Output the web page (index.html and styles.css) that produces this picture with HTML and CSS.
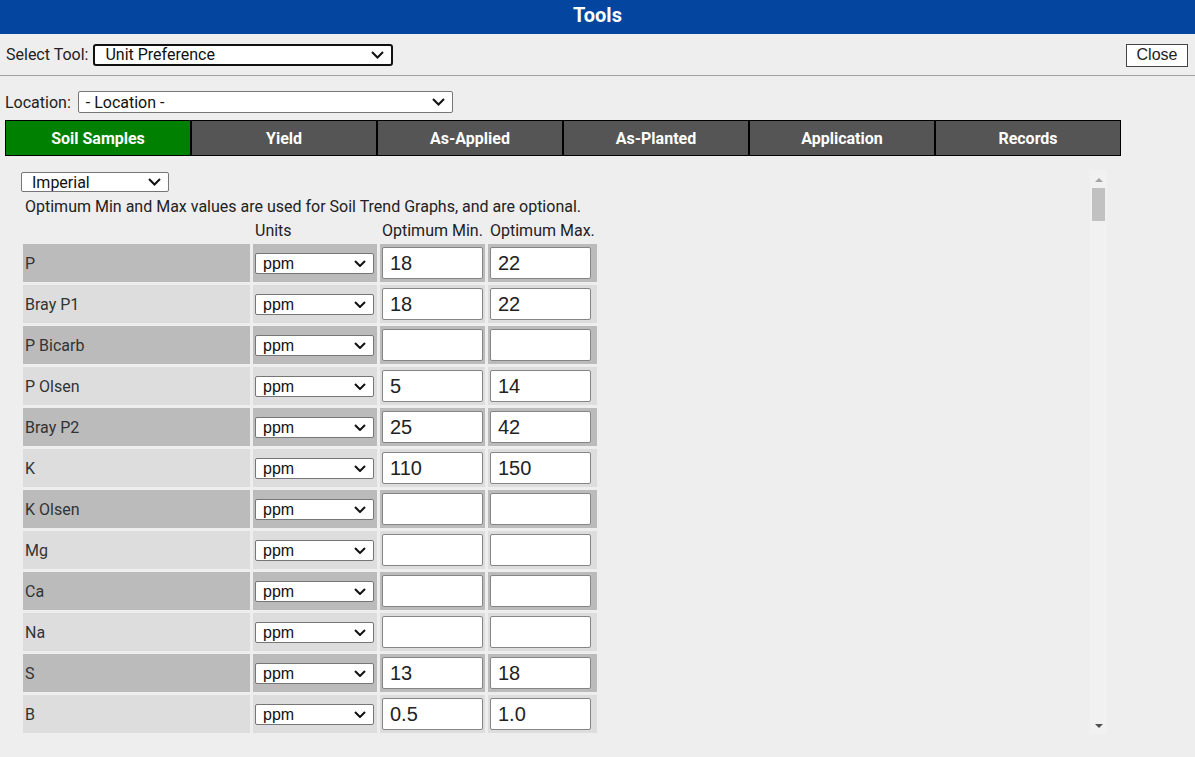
FILE: index.html
```html
<!DOCTYPE html>
<html lang="en">
<head>
<meta charset="utf-8">
<title>Tools</title>
<link rel="stylesheet" href="styles.css">
</head>
<body>
<div class="titlebar">Tools</div>
<div class="toolbar">
  <label class="lbl">Select Tool:</label>
  <div class="sel sel-tool"><span>Unit Preference</span><svg class="chev" width="13" height="8" viewBox="0 0 13 8"><path d="M1 1 L6.5 6.5 L12 1" fill="none" stroke="#111" stroke-width="2"/></svg></div>
  <div class="spacer"></div>
  <button class="close-btn">Close</button>
</div>
<div class="loc-row">
  <label class="lbl">Location:</label>
  <div class="sel sel-loc"><span>- Location -</span><svg class="chev" width="13" height="8" viewBox="0 0 13 8"><path d="M1 1 L6.5 6.5 L12 1" fill="none" stroke="#111" stroke-width="2"/></svg></div>
</div>
<div class="tabs">
  <div class="tab active">Soil Samples</div>
  <div class="tab">Yield</div>
  <div class="tab">As-Applied</div>
  <div class="tab">As-Planted</div>
  <div class="tab">Application</div>
  <div class="tab">Records</div>
</div>
<div class="content-wrap">
  <div class="panel">
    <div class="sel sel-sys"><span>Imperial</span><svg class="chev" width="13" height="8" viewBox="0 0 13 8"><path d="M1 1 L6.5 6.5 L12 1" fill="none" stroke="#111" stroke-width="2"/></svg></div>
    <p class="note">Optimum Min and Max values are used for Soil Trend Graphs, and are optional.</p>
    <table class="grid">
      <thead>
        <tr class="hdr"><td class="c-name"></td><td class="c-unit">Units</td><td class="c-min">Optimum Min.</td><td class="c-max">Optimum Max.</td></tr>
      </thead>
      <tbody id="rows"></tbody>
    </table>
  </div>
  <div class="scrollbar">
    <div class="sb-btn"><span class="tri-up"></span></div>
    <div class="sb-thumb"></div>
    <div class="sb-fill"></div>
    <div class="sb-btn"><span class="tri-down"></span></div>
  </div>
</div>
<script src="app.js"></script>
</body>
</html>
```

FILE: app.js
```js
const data = [
  ["P", "18", "22"],
  ["Bray P1", "18", "22"],
  ["P Bicarb", "", ""],
  ["P Olsen", "5", "14"],
  ["Bray P2", "25", "42"],
  ["K", "110", "150"],
  ["K Olsen", "", ""],
  ["Mg", "", ""],
  ["Ca", "", ""],
  ["Na", "", ""],
  ["S", "13", "18"],
  ["B", "0.5", "1.0"]
];
const chev = '<svg class="chev" width="12" height="7" viewBox="0 0 12 7"><path d="M1 1 L6 6 L11 1" fill="none" stroke="#111" stroke-width="2"/></svg>';
const tbody = document.getElementById("rows");
data.forEach((r, i) => {
  const tr = document.createElement("tr");
  tr.className = i % 2 === 0 ? "odd" : "even";
  tr.innerHTML =
    '<td class="c-name">' + r[0] + '</td>' +
    '<td class="c-unit"><div class="sel sel-unit"><span>ppm</span>' + chev + '</div></td>' +
    '<td class="c-min"><input class="num" type="text" value="' + r[1] + '"></td>' +
    '<td class="c-max"><input class="num" type="text" value="' + r[2] + '"></td>';
  tbody.appendChild(tr);
});
```

FILE: styles.css
```css
* { box-sizing: border-box; }
html, body { margin: 0; padding: 0; }
body {
  background: #eeeeee;
  font-family: Roboto, "Liberation Sans", Arial, sans-serif;
  color: #222;
  width: 1195px;
  height: 757px;
  overflow: hidden;
}
.titlebar {
  height: 34px;
  line-height: 31px;
  background: #0445a0;
  color: #fff;
  font-weight: bold;
  font-size: 20px;
  text-align: center;
}
.toolbar {
  height: 42px;
  display: flex;
  align-items: center;
  padding: 0 7px 0 6px;
  border-bottom: 1px solid #a0a0a0;
}
.lbl { font-size: 16px; color: #222; }
.spacer { flex: 1; }
.sel {
  display: flex;
  align-items: center;
  justify-content: space-between;
  background: #fff;
  border: 1px solid #767676;
  border-radius: 2px;
  color: #111;
  font-size: 16px;
}
.sel .chev { flex: none; }
.sel-tool {
  margin-left: 5px;
  width: 300px;
  height: 22px;
  border: 2px solid #111;
  border-radius: 3px;
  padding: 0 7px 0 10px;
}
.close-btn {
  width: 62px;
  height: 23px;
  background: #fff;
  border: 1px solid #444;
  font-family: "Liberation Sans", Arial, sans-serif;
  font-size: 16px;
  color: #222;
  padding: 0;
  margin-top: 1px;
}
.loc-row {
  display: flex;
  align-items: center;
  padding: 15px 0 0 5px;
  height: 37px;
}
.sel-loc {
  margin-left: 7px;
  width: 375px;
  height: 22px;
  padding: 0 7px 0 7px;
}
.tabs {
  display: flex;
  margin: 7px 0 0 5px;
}
.tab {
  width: 186px;
  height: 36px;
  border: 1px solid #000;
  background: #555555;
  color: #fff;
  font-weight: bold;
  font-size: 16px;
  display: flex;
  align-items: center;
  justify-content: center;
}
.tab.active { background: #008000; }
.content-wrap {
  display: flex;
  margin: 14px 0 0 17px;
  height: 564px;
}
.panel {
  width: 1073px;
  height: 564px;
  overflow: hidden;
  padding-top: 2px;
}
.sel-sys {
  margin-left: 4px;
  width: 148px;
  height: 20px;
  padding: 0 7px 0 10px;
}
.note {
  margin: 6px 0 0 8px;
  font-size: 16px;
  line-height: 18px;
  color: #222;
  white-space: nowrap;
}
.grid {
  margin-left: 3px;
  border-collapse: separate;
  border-spacing: 3px;
  font-size: 16px;
  color: #333;
}
.grid td { padding: 0 2px; white-space: nowrap; }
.grid .hdr td { height: 22px; vertical-align: middle; color: #222; padding-top: 1px; }
.c-name { width: 227px; }
.c-unit { width: 124px; }
.c-min { width: 105px; }
.c-max { width: 108px; }
.grid tbody td { height: 38px; padding: 0 2px; vertical-align: middle; }
tr.odd td { background: #bbbbbb; }
tr.even td { background: #dddddd; }
.sel-unit {
  width: 119px;
  height: 21px;
  padding: 0 7px 0 7px;
  font-family: "Liberation Sans", Arial, sans-serif;
  font-size: 16px;
  align-items: flex-end;
}
.sel-unit span { line-height: 18px; }
.sel-unit .chev { align-self: center; margin-top: 1px; }
.num {
  display: block;
  width: 101px;
  height: 32px;
  border: 1px solid #858585;
  border-radius: 2px;
  background: #fff;
  font-family: "Liberation Sans", Arial, sans-serif;
  font-size: 20px;
  color: #222;
  padding: 0 0 0 7px;
  margin: 0;
  outline: none;
}
.scrollbar {
  width: 17px;
  height: 564px;
  background: #f1f1f1;
  display: flex;
  flex-direction: column;
}
.sb-btn {
  height: 17px;
  display: flex;
  align-items: center;
  justify-content: center;
}
.tri-up {
  width: 0; height: 0;
  border-left: 4px solid transparent;
  border-right: 4px solid transparent;
  border-bottom: 4px solid #a3a3a3;
  margin-top: 3px;
}
.tri-down {
  width: 0; height: 0;
  border-left: 4px solid transparent;
  border-right: 4px solid transparent;
  border-top: 4px solid #505050;
  margin-top: 1px;
}
.sb-thumb {
  height: 33px;
  margin: 1px 2px 0 2px;
  background: #c1c1c1;
}
.sb-fill { flex: 1; }
```
